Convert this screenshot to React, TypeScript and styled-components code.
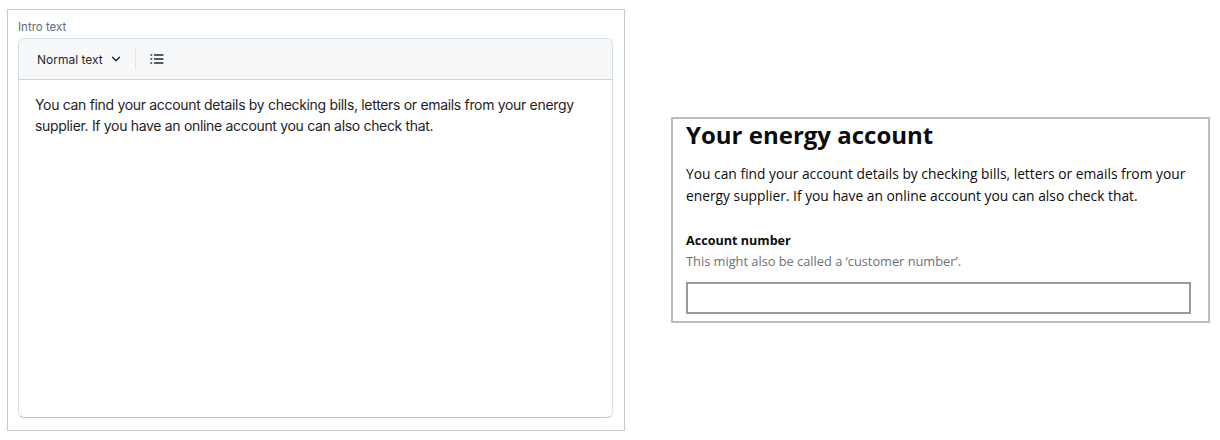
import React from "react";
import styled, { createGlobalStyle } from "styled-components";

const Global = createGlobalStyle`
  html, body { margin: 0; padding: 0; background: #fff; }
  * { box-sizing: border-box; }
`;

const Page = styled.div`
  width: 1220px;
  height: 440px;
  display: flex;
  align-items: center;
  padding-left: 7px;
  gap: 46px;
`;

const EditorPanel = styled.section`
  width: 618px;
  height: 422px;
  border: 1px solid #c9c9c9;
  padding: 8px 11px 12px 10px;
  display: flex;
  flex-direction: column;
  font-family: Inter, "Liberation Sans", sans-serif;
`;

const FieldLabel = styled.div`
  font-size: 11.5px;
  color: #5b6b7c;
  height: 20px;
  line-height: 18px;
`;

const Editor = styled.div`
  flex: 1;
  border: 1px solid #d3dfe6;
  border-bottom-color: #b7c8d3;
  border-radius: 6px;
  display: flex;
  flex-direction: column;
  overflow: hidden;
`;

const Toolbar = styled.div`
  height: 41px;
  background: #f6f8fa;
  border-bottom: 1px solid #c9d8e0;
  display: flex;
  align-items: center;
  padding-left: 18px;
  gap: 14px;
`;

const StyleSelect = styled.div`
  display: flex;
  align-items: center;
  gap: 8px;
  font-size: 12px;
  color: #1f2933;
`;

const Separator = styled.div`
  width: 1px;
  height: 22px;
  background: #e2e7ec;
`;

const IconButton = styled.div`
  display: flex;
  align-items: center;
  color: #1f2933;
`;

const Body = styled.div`
  padding: 14px 16px;
  font-size: 14px;
  letter-spacing: -0.32px;
  line-height: 21px;
  color: #1f2328;
`;

const Preview = styled.section`
  width: 539px;
  height: 206px;
  border: 2px solid #bdbdbd;
  padding: 0 17px 6px 13px;
  font-family: "Open Sans", sans-serif;
  color: #0b0c0c;
  display: flex;
  flex-direction: column;
`;

const Heading = styled.h1`
  margin: 0;
  font-size: 24px;
  font-weight: 700;
  line-height: 32px;
`;

const Para = styled.p`
  margin: 12px 0 0;
  font-size: 13.8px;
  line-height: 22px;
`;

const Label = styled.div`
  margin-top: 24px;
  font-size: 12.6px;
  font-weight: 700;
  line-height: 20px;
`;

const Hint = styled.div`
  font-size: 12.8px;
  line-height: 20px;
  color: #6b7175;
`;

const Input = styled.div`
  margin-top: 11px;
  height: 32px;
  border: 2px solid #9a9a9a;
`;

export default function App() {
  return (
    <>
      <Global />
      <Page>
        <EditorPanel>
          <FieldLabel>Intro text</FieldLabel>
          <Editor>
            <Toolbar>
              <StyleSelect>
                Normal text
                <svg width="10" height="10" viewBox="0 0 10 10" fill="none" stroke="#1f2933" strokeWidth="1.4" strokeLinecap="round" strokeLinejoin="round">
                  <path d="M1.5 3.2 5 6.7 8.5 3.2" />
                </svg>
              </StyleSelect>
              <Separator />
              <IconButton>
                <svg width="14" height="12" viewBox="0 0 14 12" fill="none" stroke="#1f2933" strokeWidth="1.3" strokeLinecap="round">
                  <path d="M4.5 2h8.5M4.5 6h8.5M4.5 10h8.5" />
                  <path d="M1 2h.6M1 6h.6M1 10h.6" strokeWidth="1.6" />
                </svg>
              </IconButton>
            </Toolbar>
            <Body>
              You can find your account details by checking bills, letters or emails from your energy
              supplier. If you have an online account you can also check that.
            </Body>
          </Editor>
        </EditorPanel>
        <Preview>
          <Heading>Your energy account</Heading>
          <Para>
            You can find your account details by checking bills, letters or emails from your
            energy supplier. If you have an online account you can also check that.
          </Para>
          <Label>Account number</Label>
          <Hint>This might also be called a ‘customer number’.</Hint>
          <Input />
        </Preview>
      </Page>
    </>
  );
}
